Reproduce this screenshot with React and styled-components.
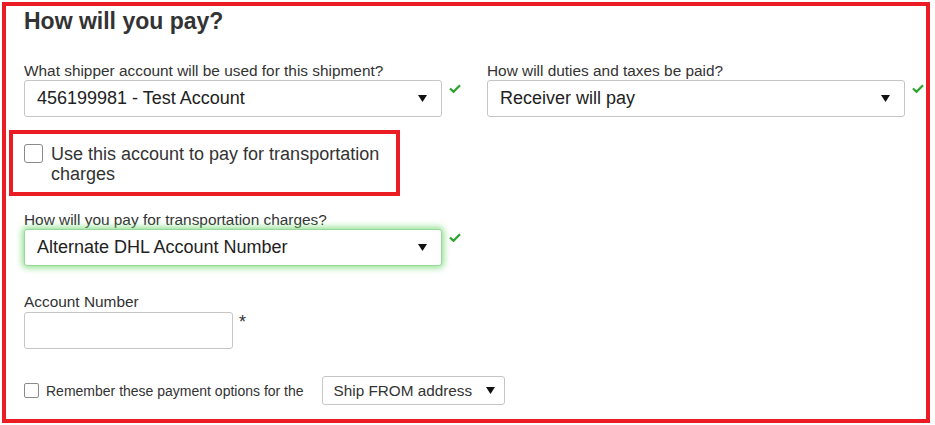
import styled, { createGlobalStyle } from "styled-components";

const Global = createGlobalStyle`
  body {
    margin: 0;
    background: #fff;
    font-family: "Liberation Sans", Arial, sans-serif;
    color: #333;
  }
`;

const Frame = styled.div`
  box-sizing: border-box;
  margin: 2px;
  width: 928px;
  height: 421px;
  border: 4px solid #ec1c24;
  padding: 1px 0 0 18px;
  display: flex;
  flex-direction: column;
`;

const Heading = styled.h2`
  margin: 0;
  font-size: 23px;
  line-height: 28px;
  font-weight: bold;
  color: #333;
`;

const TopRow = styled.div`
  display: grid;
  grid-template-columns: 463px 1fr;
  margin-top: 27px;
`;

const Field = styled.div`
  display: flex;
  flex-direction: column;
`;

const Label = styled.label`
  font-size: 15.4px;
  line-height: 18px;
  color: #333;
  margin-bottom: ${(p) => p.$gap || 0}px;
`;

const SelectRow = styled.div`
  display: flex;
  align-items: flex-start;
`;

const SelectBox = styled.div`
  box-sizing: border-box;
  width: 418px;
  height: 37px;
  border: 1px solid ${(p) => (p.$glow ? "#9ad79a" : "#c6c6c6")};
  border-radius: 3px;
  background: #fff;
  display: flex;
  align-items: center;
  justify-content: space-between;
  padding: 0 14px 0 12px;
  font-size: 18px;
  color: #222;
  box-shadow: ${(p) =>
    p.$glow ? "0 0 6px 2px rgba(110, 215, 110, 0.75)" : "none"};
`;

const Check = styled.svg`
  margin: 4px 0 0 7px;
  flex-shrink: 0;
`;

const Highlight = styled.div`
  box-sizing: border-box;
  margin: 13px 0 0 -15px;
  width: 391px;
  height: 66px;
  border: 4px solid #ec1c24;
  padding: 10px 0 0 11px;
  display: flex;
  align-items: flex-start;
  gap: 8px;
`;

const Box = styled.span`
  box-sizing: border-box;
  flex-shrink: 0;
  width: ${(p) => p.$size}px;
  height: ${(p) => p.$size}px;
  border: 1px solid #8a8a8a;
  border-radius: ${(p) => (p.$size > 16 ? 3 : 2)}px;
  background: #fff;
`;

const BigText = styled.span`
  font-size: 18px;
  line-height: 20px;
  color: #333;
`;

const Section = styled.div`
  margin-top: ${(p) => p.$top}px;
  display: flex;
  flex-direction: column;
`;

const InputRow = styled.div`
  display: flex;
  align-items: flex-start;
`;

const TextInput = styled.div`
  box-sizing: border-box;
  width: 209px;
  height: 37px;
  border: 1px solid #c6c6c6;
  border-radius: 3px;
  background: #fff;
`;

const Star = styled.span`
  margin: 0 0 0 6px;
  font-size: 18px;
  line-height: 20px;
  color: #333;
`;

const BottomRow = styled.div`
  margin-top: 27px;
  display: flex;
  align-items: center;
  gap: 7px;
`;

const SmallText = styled.span`
  font-size: 14px;
  color: #333;
  margin-right: 11px;
`;

const SmallSelect = styled.div`
  box-sizing: border-box;
  width: 183px;
  height: 29px;
  border: 1px solid #c6c6c6;
  border-radius: 3px;
  display: flex;
  align-items: center;
  justify-content: space-between;
  padding: 0 9px 0 11px;
  font-size: 15.3px;
  color: #333;
`;

function Arrow() {
  return (
    <svg width="9" height="7" viewBox="0 0 9 7">
      <path d="M0 0 H9 L4.5 7 Z" fill="#111" />
    </svg>
  );
}

function Tick() {
  return (
    <Check width="12" height="9" viewBox="0 0 12 9">
      <path
        d="M1 4.5 L4.5 7.8 L11 1.2"
        fill="none"
        stroke="#2aa52a"
        strokeWidth="2.2"
      />
    </Check>
  );
}

function Dropdown({ value, glow }) {
  return (
    <SelectRow>
      <SelectBox $glow={glow}>
        <span>{value}</span>
        <Arrow />
      </SelectBox>
      <Tick />
    </SelectRow>
  );
}

export default function App() {
  return (
    <>
      <Global />
      <Frame>
        <Heading>How will you pay?</Heading>
        <TopRow>
          <Field>
            <Label>What shipper account will be used for this shipment?</Label>
            <Dropdown value="456199981 - Test Account" />
          </Field>
          <Field>
            <Label>How will duties and taxes be paid?</Label>
            <Dropdown value="Receiver will pay" />
          </Field>
        </TopRow>

        <Highlight>
          <Box $size={19} />
          <BigText>
            Use this account to pay for transportation
            <br />
            charges
          </BigText>
        </Highlight>

        <Section $top={15}>
          <Label>How will you pay for transportation charges?</Label>
          <Dropdown value="Alternate DHL Account Number" glow />
        </Section>

        <Section $top={27}>
          <Label $gap={1}>Account Number</Label>
          <InputRow>
            <TextInput />
            <Star>*</Star>
          </InputRow>
        </Section>

        <BottomRow>
          <Box $size={15} />
          <SmallText>Remember these payment options for the</SmallText>
          <SmallSelect>
            <span>Ship FROM address</span>
            <Arrow />
          </SmallSelect>
        </BottomRow>
      </Frame>
    </>
  );
}
